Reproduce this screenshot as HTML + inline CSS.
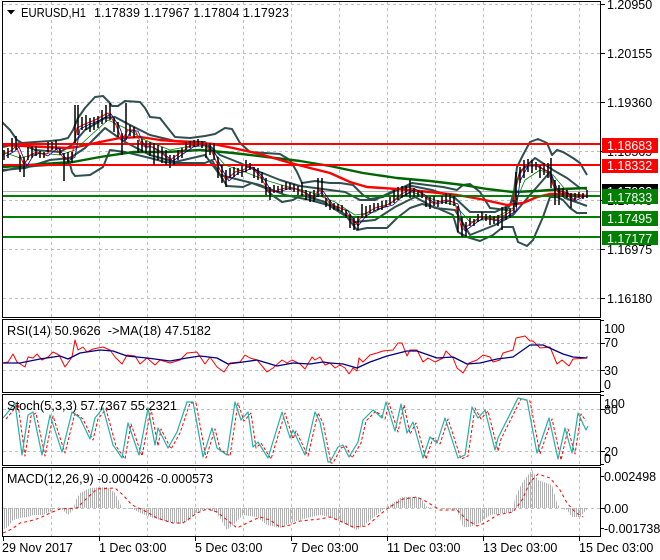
<!DOCTYPE html>
<html><head><meta charset="utf-8"><style>
html,body{margin:0;padding:0;background:#fff}
svg{display:block}
text{font-family:"Liberation Sans",sans-serif;font-size:12.5px;fill:#000}
.g{stroke:#c0c0c0;stroke-width:1;stroke-dasharray:3 3;fill:none}
.l{fill:none;stroke-linejoin:round}
.bb{stroke:#2f4f4f;stroke-width:2;fill:none;stroke-linejoin:round}
.w{fill:#fff}
</style></head><body>
<svg width="660" height="560" viewBox="0 0 660 560" xmlns="http://www.w3.org/2000/svg">
<defs>
<clipPath id="c1"><rect x="3" y="2" width="597" height="315"/></clipPath>
<clipPath id="c2"><rect x="3" y="320" width="597" height="72"/></clipPath>
<clipPath id="c3"><rect x="3" y="395" width="597" height="70"/></clipPath>
<clipPath id="c4"><rect x="3" y="468" width="597" height="68"/></clipPath>
<pattern id="h" width="2" height="4" patternUnits="userSpaceOnUse"><rect width="1" height="4" fill="#b0b0b0"/></pattern>
</defs>
<rect width="660" height="560" fill="#fff"/>
<g shape-rendering="crispEdges">
<path class="g" d="M51.5 2V317M99.5 2V317M147.5 2V317M195.5 2V317M243.5 2V317M291.5 2V317M339.5 2V317M387.5 2V317M435.5 2V317M483.5 2V317M531.5 2V317M579.5 2V317"/>
<path class="g" d="M51.5 320V392M99.5 320V392M147.5 320V392M195.5 320V392M243.5 320V392M291.5 320V392M339.5 320V392M387.5 320V392M435.5 320V392M483.5 320V392M531.5 320V392M579.5 320V392"/>
<path class="g" d="M51.5 395V465M99.5 395V465M147.5 395V465M195.5 395V465M243.5 395V465M291.5 395V465M339.5 395V465M387.5 395V465M435.5 395V465M483.5 395V465M531.5 395V465M579.5 395V465"/>
<path class="g" d="M51.5 468V536M99.5 468V536M147.5 468V536M195.5 468V536M243.5 468V536M291.5 468V536M339.5 468V536M387.5 468V536M435.5 468V536M483.5 468V536M531.5 468V536M579.5 468V536"/>
<path class="g" d="M3 4.5H600M3 53.5H600M3 102.5H600M3 151.5H600M3 200.5H600M3 249.5H600M3 298.5H600M3 343.5H600M3 370.5H600M3 409.5H600M3 451.5H600M3 508.5H600"/>
<path d="M3 191.5H600" stroke="#b4b4b4" stroke-width="1"/>
</g>
<g clip-path="url(#c1)">
<polyline class="bb" points="2,122 10,130 17,140 22,143 35,142 50,141 60,140 68,138 73,130 78,118 85,108 95,97 103,96 109,102 112,106 118,106 125,101 140,102 145,108 150,117 160,118 167,127 175,137 190,138 205,136 215,134 225,128 232,129 240,143 250,152 265,153 280,154 290,160 297,172 302,183 315,181 330,183 340,183 353,185 363,195 370,199 383,197 397,190 412,183 427,185 443,187 457,190 463,185 470,184 480,192 490,208 507,210 513,200 517,167 523,155 530,142 538,139 547,143 552,155 557,150 563,152 573,158 580,163 587,175"/>
<polyline class="bb" points="2,171 17,168 35,166 50,165 70,164 72,172 75,176 90,175 103,167 110,150 125,152 150,158 165,162 175,163 205,163 212,160 220,175 227,186 243,187 252,183 265,188 272,195 282,202 293,200 302,195 325,202 330,206 347,217 357,230 367,228 387,228 397,218 410,208 422,204 437,208 453,215 458,232 467,237 480,241 493,235 503,227 513,227 518,242 527,246 533,240 543,217 550,197 557,197 563,200 570,208 577,213 587,213"/>
<polyline class="bb" points="3,147 20,143 35,150 60,152 72,145 85,130 105,118 115,117 130,125 150,135 175,141 205,142 220,155 240,163 260,172 280,180 300,186 330,190 345,192 360,200 375,200 395,190 412,186 432,190 455,198 470,212 495,212 510,205 520,172 535,158 553,170 567,178 580,188 587,189"/>
<polyline class="bb" points="3,170 25,168 50,160 70,158 85,148 105,128 125,142 150,155 175,162 205,155 220,175 240,180 260,185 285,195 310,200 335,207 355,222 375,220 395,207 415,197 435,208 455,210 470,235 495,225 513,215 530,195 550,172 555,188 565,198 587,206"/>
<polyline class="l" stroke="#006400" stroke-width="2.4" points="3,167 43,164 73,162 100,157 133,152 167,152 200,150 233,153 267,157 300,161 330,166 363,173 397,178 430,181 463,185 487,189 513,192 537,191 563,189 587,188"/>
<polyline class="l" stroke="#ff0000" stroke-width="2.4" points="3,145 67,148 77,147 100,142 120,138 140,137 160,140 187,142 213,144 233,148 260,154 287,162 310,168 330,173 350,182 367,187 397,189 430,192 457,195 480,199 507,205 523,203 537,197 550,194 563,194 587,196"/>
<path d="M3 144H600M3 165H600" stroke="#ff0000" stroke-width="2"/>
<path d="M3 196H600M3 217H600M3 237H600" stroke="#007f00" stroke-width="2"/>
<polyline class="l" stroke="#007f00" stroke-width="0.8" points="3,152 20,158 40,153 60,155 75,150 90,136 108,120 125,128 145,140 170,150 190,146 208,146 225,165 245,172 265,180 285,186 310,192 335,202 355,215 375,212 395,200 412,192 435,200 455,205 470,222 495,218 513,208 525,180 540,170 553,175 570,195 587,196"/>
<polyline class="l" stroke="#0000a0" stroke-width="0.8" transform="translate(3,1)" points="3,155 12,150 16,146 24,165 30,155 37,152 45,155 55,147 65,160 72,156 77,128 85,124 95,120 108,113 116,125 122,140 128,130 135,130 142,146 150,146 160,152 170,160 180,153 190,146 203,144 212,152 220,170 226,180 235,172 243,170 250,166 260,176 268,190 275,191 285,188 293,188 303,192 312,197 320,190 330,204 345,210 355,225 363,215 375,208 390,204 400,195 412,188 422,194 432,203 447,200 455,203 462,230 470,224 480,217 495,220 505,215 513,210 517,180 525,165 535,165 548,172 555,190 565,192 572,200 580,196 584,195"/>
<polyline class="l" stroke="#ff0000" stroke-width="1" points="3,155 12,150 16,146 24,165 30,155 37,152 45,155 55,147 65,160 72,156 77,128 85,124 95,120 108,113 116,125 122,140 128,130 135,130 142,146 150,146 160,152 170,160 180,153 190,146 203,144 212,152 220,170 226,180 235,172 243,170 250,166 260,176 268,190 275,191 285,188 293,188 303,192 312,197 320,190 330,204 345,210 355,225 363,215 375,208 390,204 400,195 412,188 422,194 432,203 447,200 455,203 462,230 470,224 480,217 495,220 505,215 513,210 517,180 525,165 535,165 548,172 555,190 565,192 572,200 580,196 587,196"/>
<path stroke="#000" stroke-width="1.5" fill="none" d="M4 150V160M8 148V158M12 138V152M16 136V150M20 155V172M24 157V177M28 147V160M32 146V158M36 146V156M40 151V158M44 152V158M48 142V152M52 142V150M56 140V150M60 148V155M64 153V181M68 152V163M72 152V163M75 105V143M78 105V135M82 117V130M86 115V130M90 118V132M94 117V130M98 116V128M102 110V124M106 105V122M110 103V120M114 118V132M118 122V137M122 133V155M126 103V140M130 125V136M134 127V138M138 140V153M142 139V152M146 141V153M150 142V156M154 143V165M158 145V160M162 147V163M166 150V165M170 155V168M174 155V165M178 150V160M182 148V158M186 142V150M190 141V148M194 140V147M198 139V146M202 141V148M206 143V158M210 143V155M214 143V160M218 157V178M222 165V183M226 170V187M230 168V178M234 167V177M238 168V175M242 165V177M246 160V172M250 163V170M254 167V178M258 168V180M262 172V183M266 178V195M270 187V200M274 185V193M278 186V192M282 185V193M286 182V190M290 183V190M294 184V192M298 186V195M302 182V196M306 190V200M310 192V202M314 190V202M318 178V197M322 178V197M326 198V207M330 200V210M334 203V210M338 204V211M342 205V212M346 210V218M350 214V228M354 218V230M358 216V230M362 204V218M366 206V218M370 205V213M374 203V211M378 203V210M382 201V210M386 200V207M390 197V205M394 190V203M398 187V200M402 186V198M406 186V196M410 180V198M414 188V197M418 190V197M422 191V198M426 197V207M430 197V209M434 196V206M438 200V207M442 196V204M446 193V204M450 194V205M454 196V206M458 206V232M462 217V237M466 222V237M470 218V226M474 219V226M478 214V222M482 212V220M486 214V221M490 215V225M494 216V224M498 215V226M502 207V230M506 207V220M510 208V218M514 200V212M516 172V207M520 167V183M524 160V178M528 159V172M532 160V173M536 162V170M540 165V178M544 163V175M548 163V178M551 158V188M555 180V205M559 185V205M563 188V197M567 190V198M571 193V208M575 193V200M579 192V198M583 193V199M587 190V198"/>
</g>
<g clip-path="url(#c2)">
<polyline class="l" stroke="#ff0000" stroke-width="1" points="3,363 8,362 13,354 17,362 25,367 28,357 33,358 37,354 42,360 48,357 53,352 59,355 65,367 72,357 75,340 78,350 83,347 87,352 93,349 103,347 110,350 115,357 122,364 127,355 135,356 140,364 147,358 155,365 160,360 170,363 180,360 187,353 197,352 205,364 210,357 217,367 224,372 230,363 240,362 245,355 250,358 257,360 267,372 273,368 282,360 287,363 292,360 300,364 305,369 312,357 315,360 320,357 325,365 330,363 335,368 340,365 345,368 349,374 353,368 357,371 359,358 363,362 370,355 377,353 383,351 393,350 398,343 402,343 407,356 410,350 417,350 423,362 428,358 435,362 443,358 446,351 453,358 457,368 463,373 469,363 477,360 483,355 490,357 493,362 500,360 503,353 513,350 516,338 525,336 530,341 533,341 540,348 550,347 557,364 562,360 569,366 573,359 587,358 587,356"/>
<polyline class="l" stroke="#000080" stroke-width="1.3" points="3,363 20,363 40,359 60,356 68,359 80,353 100,350 113,351 127,356 147,358 170,361 187,358 200,356 217,358 228,364 243,362 257,360 277,366 293,363 310,364 323,362 330,363 343,364 357,368 370,362 387,356 407,351 417,351 437,358 453,357 467,364 480,363 497,359 513,357 530,345 543,345 563,354 573,357 587,358"/>
</g>
<g clip-path="url(#c3)">
<polyline class="l" stroke="#ff0000" stroke-width="1" stroke-dasharray="3 2" transform="translate(3,1)" points="3,418 8,412 15,403 22,455 28,415 33,412 42,455 50,415 62,452 72,412 80,418 90,439 95,418 103,408 113,445 122,458 128,423 139,455 148,408 155,445 158,428 168,448 177,432 187,402 193,402 203,457 212,428 217,448 227,455 235,402 241,420 248,412 253,447 258,442 268,458 282,412 290,438 293,430 305,455 315,412 320,422 328,462 330,462 338,447 343,445 349,457 358,442 363,420 373,410 382,418 386,402 395,431 401,404 407,433 413,422 423,458 430,437 437,443 445,418 458,458 465,455 472,407 478,418 485,410 495,450 498,438 518,398 527,400 537,453 549,418 558,459 565,428 572,453 578,413 583,420"/>
<polyline class="l" stroke="#20b2aa" stroke-width="1.2" points="3,418 8,412 15,403 22,455 28,415 33,412 42,455 50,415 62,452 72,412 80,418 90,439 95,418 103,408 113,445 122,458 128,423 139,455 148,408 155,445 158,428 168,448 177,432 187,402 193,402 203,457 212,428 217,448 227,455 235,402 241,420 248,412 253,447 258,442 268,458 282,412 290,438 293,430 305,455 315,412 320,422 328,462 330,462 338,447 343,445 349,457 358,442 363,420 373,410 382,418 386,402 395,431 401,404 407,433 413,422 423,458 430,437 437,443 445,418 458,458 465,455 472,407 478,418 485,410 495,450 498,438 518,398 527,400 537,453 549,418 558,459 565,428 572,453 578,413 586,430 588,426"/>
</g>
<g clip-path="url(#c4)">
<polygon fill="url(#h)" points="3,508 3,530 8,527 13,520 20,518 27,517 33,515 43,515 50,512 58,507 63,510 68,515 73,510 76,500 80,493 90,488 107,487 115,493 120,503 122,508 133,509 140,513 150,517 167,522 180,524 190,520 197,512 207,509 217,513 227,530 233,525 243,515 257,517 267,525 280,528 290,523 307,518 320,515 330,517 343,523 357,530 367,523 380,512 387,507 402,497 420,497 427,507 437,508 457,510 463,527 470,527 480,523 490,515 513,512 515,498 522,483 532,470 538,480 552,485 557,503 560,508 567,510 572,517 580,517 588,508"/>
<polyline class="l" stroke="#ff0000" stroke-width="1" stroke-dasharray="3 3" points="3,533 12,529 20,523 30,521 40,518 50,513 60,509 77,508 87,498 97,489 115,488 123,495 132,505 143,510 157,518 173,523 183,523 197,513 207,509 217,512 227,520 237,528 247,523 260,517 270,520 280,527 290,525 300,521 320,519 330,517 340,521 353,527 367,526 377,517 388,508 403,499 417,497 427,502 440,510 457,510 467,520 477,526 485,523 497,515 513,512 522,500 530,482 538,474 550,478 560,490 567,503 575,512 583,517"/>
</g>
<g shape-rendering="crispEdges" fill="none" stroke="#000" stroke-width="1">
<path d="M2.5 1.5H600.5V317.5H2.5Z"/>
<path d="M2.5 319.5H600.5V392.5H2.5Z"/>
<path d="M2.5 394.5H600.5V465.5H2.5Z"/>
<path d="M2.5 467.5H600.5V536.5H2.5Z"/>
<path d="M601 4.5h4M601 53.5h4M601 102.5h4M601 151.5h4M601 200.5h4M601 249.5h4M601 298.5h4M601 320.5h3M601 343.5h4M601 370.5h4M601 391.5h3M601 395.5h3M601 409.5h4M601 451.5h4M601 464.5h3M601 476.5h3M601 508.5h4M601 528.5h3"/>
<path d="M3.5 537v4M99.5 537v4M195.5 537v4M291.5 537v4M387.5 537v4M483.5 537v4M579.5 537v4"/>
</g>
<path d="M7 10h8l-4 4.5z" fill="#000"/>
<text x="21" y="17" textLength="65" lengthAdjust="spacingAndGlyphs">EURUSD,H1</text>
<text x="94" y="17" textLength="195" lengthAdjust="spacing">1.17839 1.17967 1.17804 1.17923</text>
<text x="7" y="335" textLength="204" lengthAdjust="spacingAndGlyphs">RSI(14) 50.9626 &#160;-&gt;MA(18) 47.5182</text>
<text x="7" y="410" textLength="170" lengthAdjust="spacingAndGlyphs">Stoch(5,3,3) 57.7367 55.2321</text>
<text x="7" y="483" textLength="206" lengthAdjust="spacingAndGlyphs">MACD(12,26,9) -0.000426 -0.000573</text>
<text x="607" y="9">1.20950</text>
<text x="607" y="58">1.20155</text>
<text x="607" y="107">1.19360</text>
<text x="607" y="156">1.18565</text>
<text x="607" y="205">1.17770</text>
<text x="607" y="254">1.16975</text>
<text x="607" y="303">1.16180</text>
<rect x="602" y="184" width="56" height="15" fill="#000"/>
<text x="607" y="196" class="w">1.17923</text>
<rect x="602" y="138" width="56" height="15" fill="#ff0000"/>
<text x="607" y="150" class="w">1.18683</text>
<rect x="602" y="159" width="56" height="14" fill="#ff0000"/>
<text x="607" y="170" class="w">1.18332</text>
<rect x="602" y="189" width="56" height="15" fill="#007f00"/>
<text x="607" y="202" class="w">1.17833</text>
<rect x="602" y="211" width="56" height="15" fill="#007f00"/>
<text x="607" y="223" class="w">1.17495</text>
<rect x="602" y="231" width="56" height="14" fill="#007f00"/>
<text x="607" y="243" class="w">1.17177</text>
<text x="604" y="333">100</text>
<text x="604" y="347">70</text>
<text x="604" y="375">30</text>
<text x="604" y="389">0</text>
<text x="604" y="408">100</text>
<text x="604" y="414">80</text>
<text x="604" y="456">20</text>
<text x="604" y="463">0</text>
<text x="604" y="481">0.002498</text>
<text x="604" y="513">0.00</text>
<text x="604" y="533">-0.001738</text>
<text x="2" y="552">29 Nov 2017</text>
<text x="99" y="552">1 Dec 03:00</text>
<text x="195" y="552">5 Dec 03:00</text>
<text x="291" y="552">7 Dec 03:00</text>
<text x="387" y="552">11 Dec 03:00</text>
<text x="483" y="552">13 Dec 03:00</text>
<text x="579" y="552">15 Dec 03:00</text>
</svg>
</body></html>
